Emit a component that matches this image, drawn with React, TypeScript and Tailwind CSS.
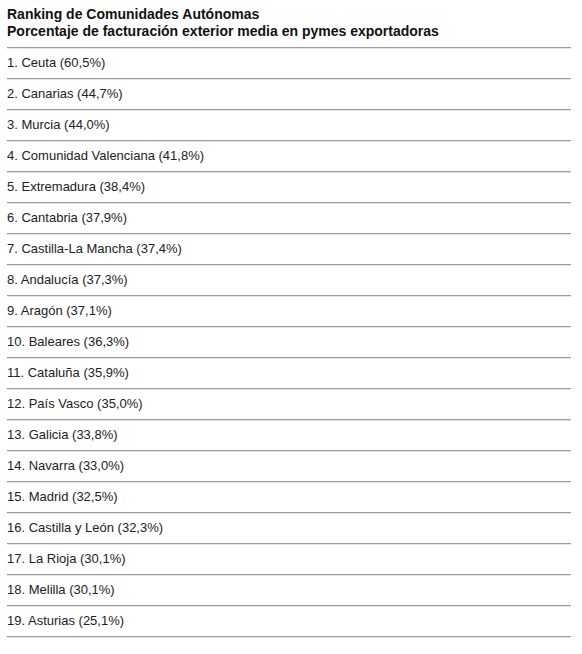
const ranking = [
  'Ceuta (60,5%)',
  'Canarias (44,7%)',
  'Murcia (44,0%)',
  'Comunidad Valenciana (41,8%)',
  'Extremadura (38,4%)',
  'Cantabria (37,9%)',
  'Castilla-La Mancha (37,4%)',
  'Andalucía (37,3%)',
  'Aragón (37,1%)',
  'Baleares (36,3%)',
  'Cataluña (35,9%)',
  'País Vasco (35,0%)',
  'Galicia (33,8%)',
  'Navarra (33,0%)',
  'Madrid (32,5%)',
  'Castilla y León (32,3%)',
  'La Rioja (30,1%)',
  'Melilla (30,1%)',
  'Asturias (25,1%)',
]

function Rule() {
  return (
    <div className="h-[2px] border-t border-[#9c9c9c] border-b border-b-[#e4e4e4]" />
  )
}

export default function App() {
  return (
    <div className="min-h-[654px] bg-white font-['Liberation_Sans',Arial,sans-serif]">
      <div className="w-[571px] pl-[7px] pt-[6px]">
        <div className="text-[14px] font-bold leading-[17px] text-[#111]">
          <div>Ranking de Comunidades Autónomas</div>
          <div>Porcentaje de facturación exterior media en pymes exportadoras</div>
        </div>
        <div className="mt-[7px]">
          <Rule />
          {ranking.map((item, i) => (
            <div key={item}>
              <div className="flex h-[29px] items-center pb-[2px] text-[13px] text-[#222]">
                {i + 1}. {item}
              </div>
              <Rule />
            </div>
          ))}
        </div>
      </div>
    </div>
  )
}
